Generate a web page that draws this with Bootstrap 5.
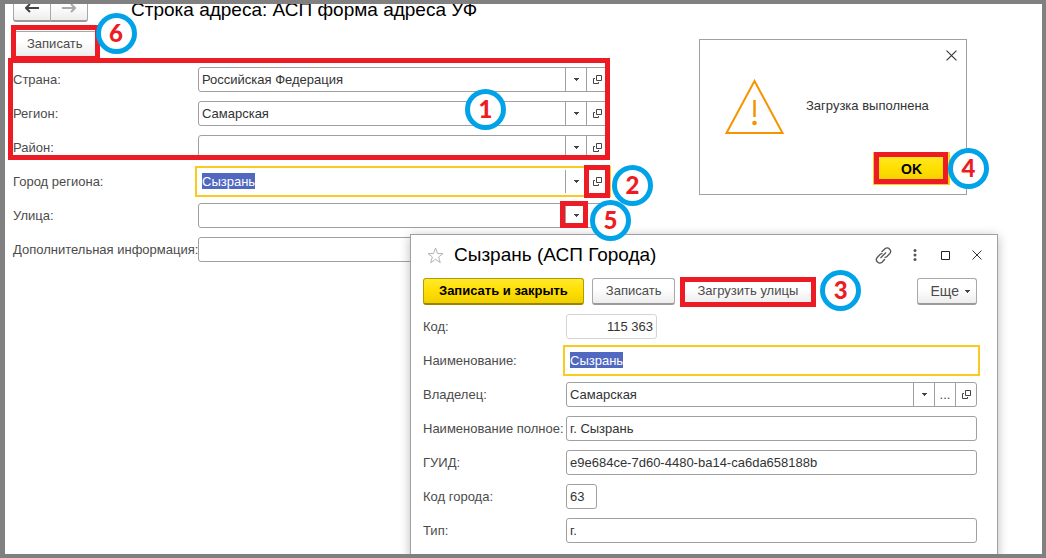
<!DOCTYPE html>
<html lang="ru">
<head>
<meta charset="utf-8">
<meta name="viewport" content="width=device-width, initial-scale=1">
<title>Строка адреса</title>
<link rel="stylesheet" href="https://cdn.jsdelivr.net/npm/bootstrap@5.3.0/dist/css/bootstrap.min.css">
<style>
  body { font: 13px/16px "Liberation Sans", Arial, sans-serif; color: #4b4b4b; }
  .desk { border: solid #808080; border-width: 4px 4px 4px 5px; background: #fff; }
  .address { max-width: 603px; padding: 0 0 0 8px; }
  .heading { font-size: 19px; line-height: 24px; color: #000; margin: 0; font-weight: 400; }
  .topline { margin-top: -9px; gap: 43px; }
  .stack { display: grid; gap: 9px; }
  .line { display: grid; grid-template-columns: 185px 1fr; align-items: center; }
  .city .line { grid-template-columns: 143px 1fr; }
  label { white-space: nowrap; }
  .btn1c { font-size: 13px; line-height: 16px; height: 27px; padding: 0 13px; color: #4b4b4b; white-space: nowrap;
    border: 1px solid #a8a8a8; border-bottom: 2px solid #9a9a9a; border-radius: 3px;
    background: linear-gradient(#fff 40%, #ededed); }
  .btn1c.primary { padding: 0 15px; color: #000; font-weight: 700; border-color: #b39c00 #b39c00 #998500;
    background: linear-gradient(#ffe92e, #ffdf00 50%, #f0cf00); }
  .btn1c.more { font-size: 14px; padding: 0 6px 0 13px; display: flex; align-items: center; gap: 6px; }
  .arrows .btn1c { width: 38px; padding: 0; display: grid; place-items: center; }
  .arrows .btn1c:first-child { border-radius: 3px 0 0 3px; }
  .arrows .btn1c:last-child { border-radius: 0 3px 3px 0; margin-left: -1px; }
  .field { display: flex; height: 25px; border: 1px solid #a0a0a0; border-radius: 3px; background: #fff; min-width: 0; }
  .field input { flex: 1; min-width: 0; width: 100%; border: 0; padding: 0 3px; background: transparent; color: #333; outline: 0; }
  .field button { flex: 0 0 21px; padding: 0; border: 0; border-left: 1px solid #a0a0a0; background: transparent;
    display: grid; place-items: center; position: relative; color: #444; }
  .field.active { border-color: #fff; border-radius: 0; outline: 2px solid #fbca1e; outline-offset: 1px; }
  .field.active input { color: #fff;
    background: linear-gradient(#5068c0, #5068c0) 3px 3px / 53px 16px no-repeat; }
  .field.muted { width: 91px; border-color: #d5d5d5; }
  .field.short { width: 31px; }
  .pane { position: absolute; background: #fff; border: 1px solid #a0a0a0; }
  .message { left: 694px; top: 35px; width: 268px; height: 156px; }
  .message .x { position: absolute; right: 9px; top: 10px; }
  .message .sign { position: absolute; left: 24px; top: 39px; }
  .message p { position: absolute; left: 106px; top: 58px; margin: 0; color: #333; white-space: nowrap; }
  .message .okay { position: absolute; right: 16px; bottom: 9px; }
  .message .okay .btn1c { width: 77px; height: 33px; font-size: 14px; border: 1px solid #fbca1e; border-radius: 0; }
  .city { left: 405px; top: 230px; width: 588px; padding: 8px 20px 20px 12px; box-shadow: 0 2px 10px #0004; }
  .city .heading { margin-left: 10px; }
  .commands { margin: 11px 0 9px; }
  .plain { border: 0; background: transparent; padding: 0; line-height: 0; }
  .tools { margin-right: -15px; }
  .tools .plain { width: 31px; }
  /* Step marks laid over the controls */
  .frame { position: absolute; border: 5px solid #ed1c24; pointer-events: none; z-index: 2; }
  .step { position: absolute; z-index: 3; width: 41px; height: 41px; border: 5px solid #00a2e8; border-radius: 50%;
    background: #fff; color: #ed1c24; font: 900 24px/30px Lato, sans-serif; text-align: center; }
</style>
</head>
<body>
<svg width="0" height="0" class="position-absolute" aria-hidden="true">
  <symbol id="down" viewBox="0 0 5 3"><path d="M0 0h5v1H4v1H3v1H2V2H1V1H0z" fill="#444"/></symbol>
  <symbol id="open" viewBox="0 0 9 9"><path d="M3.500.5h5v5h-5zM2 3.500H.5v5h5V7" fill="none" stroke="#444"/></symbol>
  <symbol id="cross" viewBox="0 0 10 10"><path d="M.5.5l9 9M9.500.5l-9 9" fill="none" stroke="#333" stroke-width="1"/></symbol>
</svg>

<div class="desk position-relative vh-100 overflow-hidden">
  <main class="address stack">
    <div class="topline d-flex align-items-end">
      <div class="arrows d-flex">
        <button class="btn1c" aria-label="Назад"><svg width="14" height="10" viewBox="0 0 14 10"><path d="M1 5h13M5 1L1 5l4 4" fill="none" stroke="#444" stroke-width="2"/></svg></button>
        <button class="btn1c" aria-label="Вперед"><svg width="14" height="10" viewBox="0 0 14 10"><path d="M0 5h13M9 1l4 4-4 4" fill="none" stroke="#aaa" stroke-width="2"/></svg></button>
      </div>
      <h1 class="heading text-nowrap">Строка адреса: АСП форма адреса УФ</h1>
    </div>
    <div class="d-flex">
      <div class="position-relative">
        <button class="btn1c">Записать</button>
        <span class="frame" style="inset:-6px -3px -3px -2px"></span>
        <span class="step" style="right:-40px;top:-18px">6</span>
      </div>
    </div>
    <form class="stack">
      <div class="stack position-relative">
        <div class="line"><label for="country">Страна:</label><div class="field"><input id="country" value="Российская Федерация"><button type="button" aria-label="Выбрать"><svg width="5" height="3"><use href="#down"/></svg></button><button type="button" aria-label="Открыть"><svg width="9" height="9"><use href="#open"/></svg></button></div></div>
        <div class="line"><label for="region">Регион:</label><div class="field"><input id="region" value="Самарская"><button type="button" aria-label="Выбрать"><svg width="5" height="3"><use href="#down"/></svg></button><button type="button" aria-label="Открыть"><svg width="9" height="9"><use href="#open"/></svg></button></div></div>
        <div class="line"><label for="district">Район:</label><div class="field"><input id="district"><button type="button" aria-label="Выбрать"><svg width="5" height="3"><use href="#down"/></svg></button><button type="button" aria-label="Открыть"><svg width="9" height="9"><use href="#open"/></svg></button></div></div>
        <span class="frame" style="inset:-9px -2px 0 -5px"></span>
        <span class="step" style="right:102px;top:22px">1</span>
      </div>
      <div class="line"><label for="town">Город региона:</label><div class="field active"><input id="town" value="Сызрань"><button type="button" aria-label="Выбрать"><svg width="5" height="3"><use href="#down"/></svg></button><button type="button" aria-label="Открыть"><svg width="9" height="9"><use href="#open"/></svg><span class="frame" style="inset:-5px -3px -5px -3px"></span><span class="step" style="left:25px;top:-5px">2</span></button></div></div>
      <div class="line"><label for="street">Улица:</label><div class="field"><input id="street"><button type="button" aria-label="Выбрать"><svg width="5" height="3"><use href="#down"/></svg><span class="frame" style="inset:-3px -2px -1px -6px"></span><span class="step" style="left:24px;top:-4px">5</span></button><button type="button" aria-label="Открыть"><svg width="9" height="9"><use href="#open"/></svg></button></div></div>
      <div class="line"><label for="extra">Дополнительная информация:</label><div class="field"><input id="extra"></div></div>
    </form>
  </main>

  <section class="pane message" role="dialog" aria-label="Сообщение">
    <button class="plain x" aria-label="Закрыть"><svg width="11" height="11"><use href="#cross"/></svg></button>
    <svg class="sign" width="62" height="57" viewBox="0 0 62 57"><path d="M30.500 2L58.500 54h-56z" fill="none" stroke="#f59300" stroke-width="2"/><path d="M30.500 21v17" stroke="#f59300" stroke-width="2.500"/><circle cx="30.500" cy="44" r="2.300" fill="#f59300"/></svg>
    <p>Загрузка выполнена</p>
    <div class="okay">
      <button class="btn1c primary">OK</button>
      <span class="frame" style="inset:0 2px 1px 1px"></span>
      <span class="step" style="left:75px;top:-4px">4</span>
    </div>
  </section>

  <section class="pane city" role="dialog" aria-labelledby="city-title">
    <div class="d-flex align-items-center">
      <button class="plain ms-1" aria-label="В избранное"><svg width="17" height="17" viewBox="0 0 17 17"><path d="M8.500 1l2 5.500h5.500l-4.400 3.500 1.700 5.700-4.800-3.400-4.800 3.400L5.400 10 1 6.500h5.500z" fill="none" stroke="#b0b4b8"/></svg></button>
      <h2 id="city-title" class="heading text-nowrap">Сызрань (АСП Города)</h2>
      <div class="d-flex align-items-center ms-auto tools">
        <button class="plain" aria-label="Ссылка"><svg width="17" height="17" viewBox="0 0 17 17"><g fill="none" stroke="#555" stroke-width="1.300"><path d="M5.500 11l5.500-5.500M6.500 5L10 1.800c3-2.600 7.400 1.600 4.800 4.700L12 9.500c-.8.700-1.500 1-2.500.8M10 12l-3 3.200c-3 2.600-7.400-1.600-4.800-4.700L5 7.500c.8-.7 1.500-1 2.500-.8"/></g></svg></button>
        <button class="plain" aria-label="Меню"><svg width="4" height="12" viewBox="0 0 4 12"><g fill="#555"><circle cx="2" cy="1.500" r="1.500"/><circle cx="2" cy="6" r="1.500"/><circle cx="2" cy="10.500" r="1.500"/></g></svg></button>
        <button class="plain" aria-label="Развернуть"><svg width="9" height="9"><path d="M.5.5h8v8h-8z" fill="none" stroke="#222"/></svg></button>
        <button class="plain" aria-label="Закрыть"><svg width="10" height="10"><use href="#cross"/></svg></button>
      </div>
    </div>
    <div class="commands d-flex gap-2">
      <button class="btn1c primary">Записать и закрыть</button>
      <button class="btn1c">Записать</button>
      <div class="position-relative">
        <button class="btn1c">Загрузить улицы</button>
        <span class="frame" style="inset:-1px -4px -2px -3px"></span>
        <span class="step" style="right:-49px;top:-8px">3</span>
      </div>
      <button class="btn1c more ms-auto">Еще <svg width="5" height="3"><use href="#down"/></svg></button>
    </div>
    <form class="stack">
      <div class="line"><label for="code">Код:</label><div class="field muted"><input id="code" class="text-end" value="115 363"></div></div>
      <div class="line"><label for="name">Наименование:</label><div class="field active"><input id="name" value="Сызрань"></div></div>
      <div class="line"><label for="owner">Владелец:</label><div class="field"><input id="owner" value="Самарская"><button type="button" aria-label="Список"><svg width="5" height="3"><use href="#down"/></svg></button><button type="button">...</button><button type="button" aria-label="Открыть"><svg width="9" height="9"><use href="#open"/></svg></button></div></div>
      <div class="line"><label for="full">Наименование полное:</label><div class="field"><input id="full" value="г. Сызрань"></div></div>
      <div class="line"><label for="guid">ГУИД:</label><div class="field"><input id="guid" value="e9e684ce-7d60-4480-ba14-ca6da658188b"></div></div>
      <div class="line"><label for="citycode">Код города:</label><div class="field short"><input id="citycode" value="63"></div></div>
      <div class="line"><label for="kind">Тип:</label><div class="field"><input id="kind" value="г."></div></div>
    </form>
  </section>
</div>
<script src="https://cdn.jsdelivr.net/npm/bootstrap@5.3.0/dist/js/bootstrap.bundle.min.js"></script>
</body>
</html>
